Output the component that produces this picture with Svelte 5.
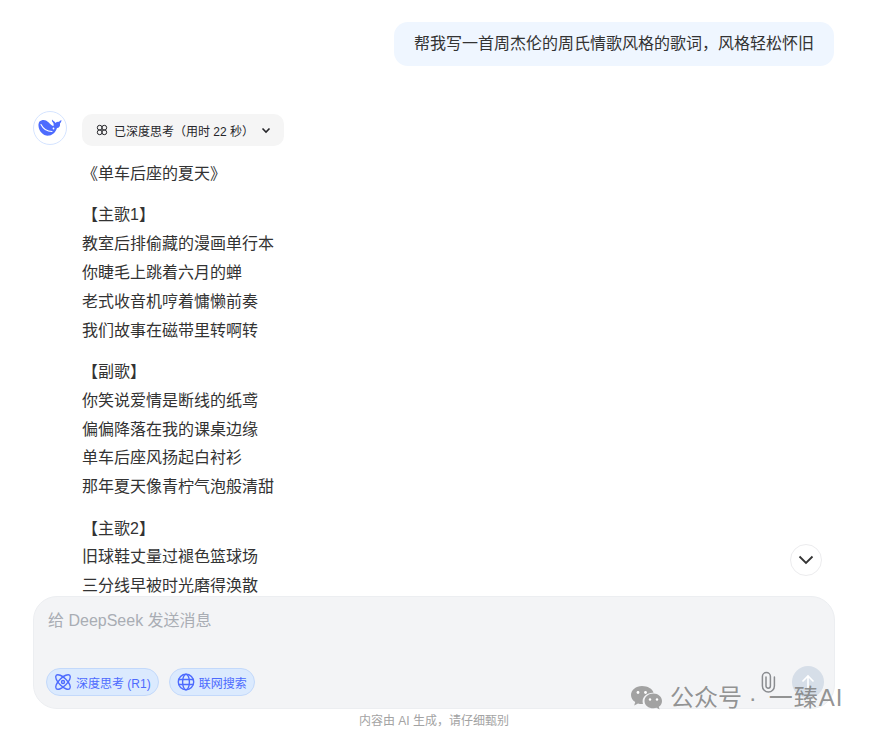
<script>
  const sections = [
    { lines: ["《单车后座的夏天》"] },
    { lines: ["【主歌1】", "教室后排偷藏的漫画单行本", "你睫毛上跳着六月的蝉", "老式收音机哼着慵懒前奏", "我们故事在磁带里转啊转"] },
    { lines: ["【副歌】", "你笑说爱情是断线的纸鸢", "偏偏降落在我的课桌边缘", "单车后座风扬起白衬衫", "那年夏天像青柠气泡般清甜"] },
    { lines: ["【主歌2】", "旧球鞋丈量过褪色篮球场", "三分线早被时光磨得涣散", "储物柜里还锁着那封信"] }
  ];
</script>

<div class="page">
  <div class="messages">
    <div class="user-row">
      <div class="bubble">帮我写一首周杰伦的周氏情歌风格的歌词，风格轻松怀旧</div>
    </div>

    <div class="reply">
      <div class="avatar">
        <svg width="24" height="18" viewBox="0 0 24 18">
          <path fill="#4d6bfe" d="M1.500 2.500C3 1 6 .500 8 1.500c3 1.500 5 5 7.500 5.500.5-1.500 0-3-1-4-.5-.5-.7-1.500-.5-2.500 1 1.500 3 2 3.500 3.500 1-1 2.500-1.500 3.500-1 .8-1 1.500-2 2.500-1.700 0 1.200-.7 2.200-1.500 3.200.5 2.500-1 4.500-3 4.500-1 3.500-4 7-7.500 7.500C6 17.500 1 13 .5 7 .3 5 .8 3.500 1.500 2.500z"/>
          <path fill="none" stroke="#fff" stroke-width="1.100" stroke-linecap="round" d="M3 5.500C5 9.500 9 12.500 14 12.500"/>
          <circle cx="15.500" cy="9.500" r="0.900" fill="#fff"/>
        </svg>
      </div>

      <div class="reply-body">
        <div class="thought">
          <svg width="12" height="12" viewBox="0 0 12 12" fill="none" stroke="#26262a" stroke-width="1">
            <circle cx="3.700" cy="3.700" r="2.400"/>
            <circle cx="8.300" cy="3.700" r="2.400"/>
            <circle cx="3.700" cy="8.300" r="2.400"/>
            <circle cx="8.300" cy="8.300" r="2.400"/>
          </svg>
          <span>已深度思考（用时 22 秒）</span>
          <svg width="12" height="12" viewBox="0 0 12 12" fill="none" stroke="#26262a" stroke-width="1.600">
            <path d="M2.500 4.500 6 8l3.500-3.500"/>
          </svg>
        </div>

        {#each sections as section}
          <p>
            {#each section.lines as line}
              <span class="line">{line}</span>
            {/each}
          </p>
        {/each}
      </div>
    </div>

    <button class="scroll-down" aria-label="滚动到底部">
      <svg width="16" height="16" viewBox="0 0 16 16" fill="none" stroke="#333" stroke-width="1.800">
        <path d="M1.500 4.500 8 11l6.500-6.500"/>
      </svg>
    </button>
  </div>

  <div class="composer">
    <div class="placeholder">给 DeepSeek 发送消息</div>
    <div class="toolbar">
      <div class="chip">
        <svg width="18" height="18" viewBox="0 0 18 18" fill="none" stroke="#4d6bfe" stroke-width="1.400">
          <ellipse cx="9" cy="9" rx="9.500" ry="4" transform="rotate(45 9 9)"/>
          <ellipse cx="9" cy="9" rx="9.500" ry="4" transform="rotate(-45 9 9)"/>
          <circle cx="9" cy="9" r="1.500"/>
        </svg>
        <span>深度思考 (R1)</span>
      </div>
      <div class="chip">
        <svg width="18" height="18" viewBox="0 0 18 18" fill="none" stroke="#4d6bfe" stroke-width="1.400">
          <circle cx="9" cy="9" r="7.700"/>
          <ellipse cx="9" cy="9" rx="3.400" ry="7.700"/>
          <path d="M1.500 6.500h15M1.500 11.500h15"/>
        </svg>
        <span>联网搜索</span>
      </div>
      <div class="actions">
        <svg class="clip" width="16" height="22" viewBox="0 0 16 22" fill="none" stroke="#8a8c90" stroke-width="1.500" stroke-linecap="round">
          <path d="M6 6v9a2.200 2.200 0 0 0 4.400 0V5.500a4 4 0 0 0-8 0V15a6 6 0 0 0 12 0V6"/>
        </svg>
        <div class="send">
          <svg width="16" height="16" viewBox="0 0 16 16" fill="none" stroke="#fff" stroke-width="1.600">
            <path d="M8 14.500V2M2.500 7.500 8 2l5.500 5.500"/>
          </svg>
        </div>
      </div>
    </div>
  </div>

  <div class="notice">内容由 AI 生成，请仔细甄别</div>

  <div class="watermark">
    <svg width="33" height="27" viewBox="0 0 33 27">
      <path fill="#a2a2a2" d="M12 1C5.900 1 1 5 1 10c0 2.900 1.600 5.400 4.200 7.100L4.200 20.500l3.800-2.100c1.200.4 2.600.6 4 .6.3 0 .7 0 1-.1-.3-.9-.4-1.800-.4-2.700 0-4.800 4.500-8.500 10-8.500.3 0 .6 0 .9 0C22.500 3.800 17.700 1 12 1z"/>
      <path fill="#a2a2a2" d="M23.500 8.500c-5 0-9 3.300-9 7.400s4 7.400 9 7.400c1.100 0 2.100-.2 3.100-.5l3 1.700-.8-2.800c2.100-1.400 3.200-3.500 3.200-5.800 0-4.100-3.900-7.400-8.500-7.400z"/>
      <circle cx="8" cy="7.500" r="1.400" fill="#fff"/>
      <circle cx="15.500" cy="7.500" r="1.400" fill="#fff"/>
      <circle cx="20" cy="14.500" r="1.200" fill="#fff"/>
      <circle cx="27" cy="14.500" r="1.200" fill="#fff"/>
    </svg>
    <span class="account">公众号 ·</span>
    <span class="brand">一臻AI</span>
  </div>
</div>

<style>
  :global(body) {
    margin: 0;
    background: #fff;
    overflow: hidden;
  }

  .page {
    position: relative;
    display: flex;
    flex-direction: column;
    width: 869px;
    height: 732px;
    font-family: "Liberation Sans", "Noto Sans CJK SC", sans-serif;
    color: #333;
    overflow: hidden;
  }

  .messages {
    position: relative;
    height: 596px;
    flex: none;
    padding: 22px 35px 0 33px;
    box-sizing: border-box;
    overflow: hidden;
  }

  .user-row {
    display: flex;
    justify-content: flex-end;
    margin-bottom: 45px;
  }

  .bubble {
    padding: 0 20px;
    height: 44px;
    line-height: 44px;
    font-size: 16px;
    background: #eff6ff;
    border-radius: 14px;
  }

  .reply {
    display: flex;
    gap: 15px;
  }

  .avatar {
    flex: none;
    display: flex;
    align-items: center;
    justify-content: center;
    width: 34px;
    height: 34px;
    box-sizing: border-box;
    border: 1px solid #d5e4ff;
    border-radius: 50%;
  }

  .reply-body {
    padding-top: 3px;
  }

  .thought {
    display: inline-flex;
    align-items: center;
    gap: 6px;
    height: 32px;
    padding: 0 12px 0 14px;
    background: #f5f5f5;
    border-radius: 10px;
    font-size: 12px;
    margin-bottom: 14px;
    vertical-align: top;
    color: #26262a;
  }

  p {
    margin: 0 0 12.6px;
    font-size: 16px;
    line-height: 28.8px;
  }

  .line {
    display: block;
  }

  .scroll-down {
    position: absolute;
    left: 790px;
    top: 544px;
    display: flex;
    align-items: center;
    justify-content: center;
    width: 32px;
    height: 32px;
    padding: 0;
    background: #fff;
    border: 1px solid #ececee;
    border-radius: 50%;
  }

  .composer {
    flex: none;
    box-sizing: border-box;
    height: 113px;
    margin: 0 34px 0 33px;
    padding: 14px 10px 0 12px;
    background: #f3f4f6;
    border: 1px solid #eceef1;
    border-radius: 24px;
  }

  .placeholder {
    height: 20px;
    line-height: 20px;
    padding-left: 2px;
    font-size: 16px;
    color: #a9adb4;
  }

  .toolbar {
    display: flex;
    align-items: center;
    gap: 10px;
    margin-top: 35px;
    height: 32px;
  }

  .chip {
    display: flex;
    align-items: center;
    gap: 4px;
    height: 28px;
    box-sizing: border-box;
    padding: 0 7px;
    font-size: 12px;
    color: #4d6bfe;
    background: #dbeafe;
    border: 1px solid #c3d9fb;
    border-radius: 14px;
  }

  .actions {
    display: flex;
    align-items: center;
    gap: 16px;
    margin-left: auto;
  }

  .send {
    display: flex;
    align-items: center;
    justify-content: center;
    width: 32px;
    height: 32px;
    background: #d6dee8;
    border-radius: 50%;
  }

  .notice {
    margin: 5px 0 0 -1px;
    text-align: center;
    font-size: 12px;
    line-height: 14px;
    color: #a3a3a3;
  }

  .watermark {
    position: absolute;
    left: 630px;
    top: 684px;
    display: flex;
    align-items: center;
    gap: 7px;
    font-size: 24px;
    line-height: 28px;
    color: rgba(120, 120, 120, 0.8);
  }

  .brand {
    margin-left: 5px;
    letter-spacing: 1px;
  }
</style>
